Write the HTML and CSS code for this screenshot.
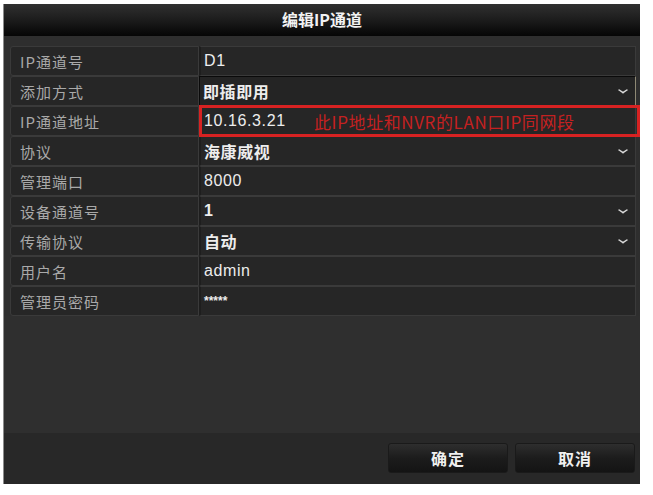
FILE: index.html
```html
<!DOCTYPE html>
<html lang="zh-CN">
<head>
  <meta charset="UTF-8">
  <title>编辑IP通道</title>
  <link rel="stylesheet" href="styles.css">
</head>
<body>
  <div class="dialog">
    <div class="dialog-title">编辑IP通道</div>

    <div class="form">
      <div class="label">IP通道号</div>
      <div class="value">D1</div>

      <div class="label">添加方式</div>
      <div class="value select focused"><b>即插即用</b><span class="chevron"></span></div>

      <div class="label">IP通道地址</div>
      <div class="value marked">
        <span class="ip">10.16.3.21</span>
        <span class="hint">此IP地址和NVR的LAN口IP同网段</span>
      </div>

      <div class="label">协议</div>
      <div class="value select"><b>海康威视</b><span class="chevron"></span></div>

      <div class="label">管理端口</div>
      <div class="value">8000</div>

      <div class="label">设备通道号</div>
      <div class="value select"><b>1</b><span class="chevron"></span></div>

      <div class="label">传输协议</div>
      <div class="value select"><b>自动</b><span class="chevron"></span></div>

      <div class="label">用户名</div>
      <div class="value">admin</div>

      <div class="label">管理员密码</div>
      <div class="value"><b class="pwd">*****</b></div>
    </div>

    <div class="spacer"></div>

    <div class="footer">
      <button class="btn">确定</button>
      <button class="btn">取消</button>
    </div>
  </div>
</body>
</html>
```

FILE: styles.css
```css
body {
  margin: 0;
  background: #fff;
  font-family: "Liberation Sans", "Noto Sans CJK SC", sans-serif;
}

.dialog {
  width: 637px;
  height: 480px;
  margin: 4px 0 0 3px;
  display: flex;
  flex-direction: column;
  background: #2e2e2e;
  border-left: 1px solid #8c8c8c;
  box-sizing: border-box;
}

.dialog-title {
  height: 32px;
  line-height: 30px;
  text-align: center;
  color: #f2f2f2;
  font-family: "Noto Sans CJK SC", sans-serif;
  font-weight: bold;
  font-size: 16px;
  background: linear-gradient(#303030, #1e1e1e 45%, #050505);
}

.form {
  margin: 10px 4px 0 6px;
  display: grid;
  grid-template-columns: 189px 1fr;
  grid-auto-rows: 30px;
  gap: 0;
}

.label,
.value {
  display: flex;
  align-items: center;
  background: #262626;
  border: 1px solid #3a3a3a;
  box-sizing: border-box;
}

.label {
  padding-left: 9px;
  color: #a9a9a9;
  font-family: "Noto Sans CJK SC", sans-serif;
  font-size: 15px;
  letter-spacing: 1px;
  border-radius: 3px 0 0 3px;
}

.value {
  padding-left: 3px;
  color: #ededed;
  font-size: 16px;
  letter-spacing: 0.6px;
  border-left: 2px solid #1e1e1e;
}

.value b {
  font-family: "Liberation Sans", "Noto Sans CJK SC", sans-serif;
  font-weight: bold;
}

.select {
  justify-content: space-between;
  padding-right: 8px;
}

.focused {
  border: 1px solid #0a0a0a;
  border-right-color: #8d8874;
  background: #242424;
}

.chevron {
  width: 6px;
  height: 6px;
  border-right: 2px solid #d8d8d8;
  border-bottom: 2px solid #d8d8d8;
  transform: scale(0.9, 0.6) rotate(45deg);
  margin-top: -3px;
}

.marked {
  position: relative;
}

.marked::after {
  content: "";
  position: absolute;
  left: -2px;
  top: -2px;
  right: -5px;
  bottom: -2px;
  border: 3px solid #d72222;
}

.ip {
  width: 110px;
}

.hint {
  color: #c42121;
  font-family: "Noto Sans CJK SC", sans-serif;
  font-size: 17px;
  letter-spacing: 0.6px;
}

.pwd {
  font-size: 12px;
  letter-spacing: 0;
}

.spacer {
  flex: 1;
  background: #2f2f2f;
}

.footer {
  height: 51px;
  display: flex;
  justify-content: flex-end;
  align-items: flex-start;
  gap: 7px;
  padding: 10px 5px 0 0;
  box-sizing: border-box;
  background: #282828;
}

.btn {
  width: 120px;
  height: 30px;
  border: 1px solid #1a1a1a;
  border-radius: 3px;
  background: linear-gradient(#2e2e2e, #1c1c1c 50%, #141414);
  color: #f0f0f0;
  font-family: "Noto Sans CJK SC", sans-serif;
  font-weight: bold;
  font-size: 16px;
  letter-spacing: 1px;
  padding: 0;
}
```
